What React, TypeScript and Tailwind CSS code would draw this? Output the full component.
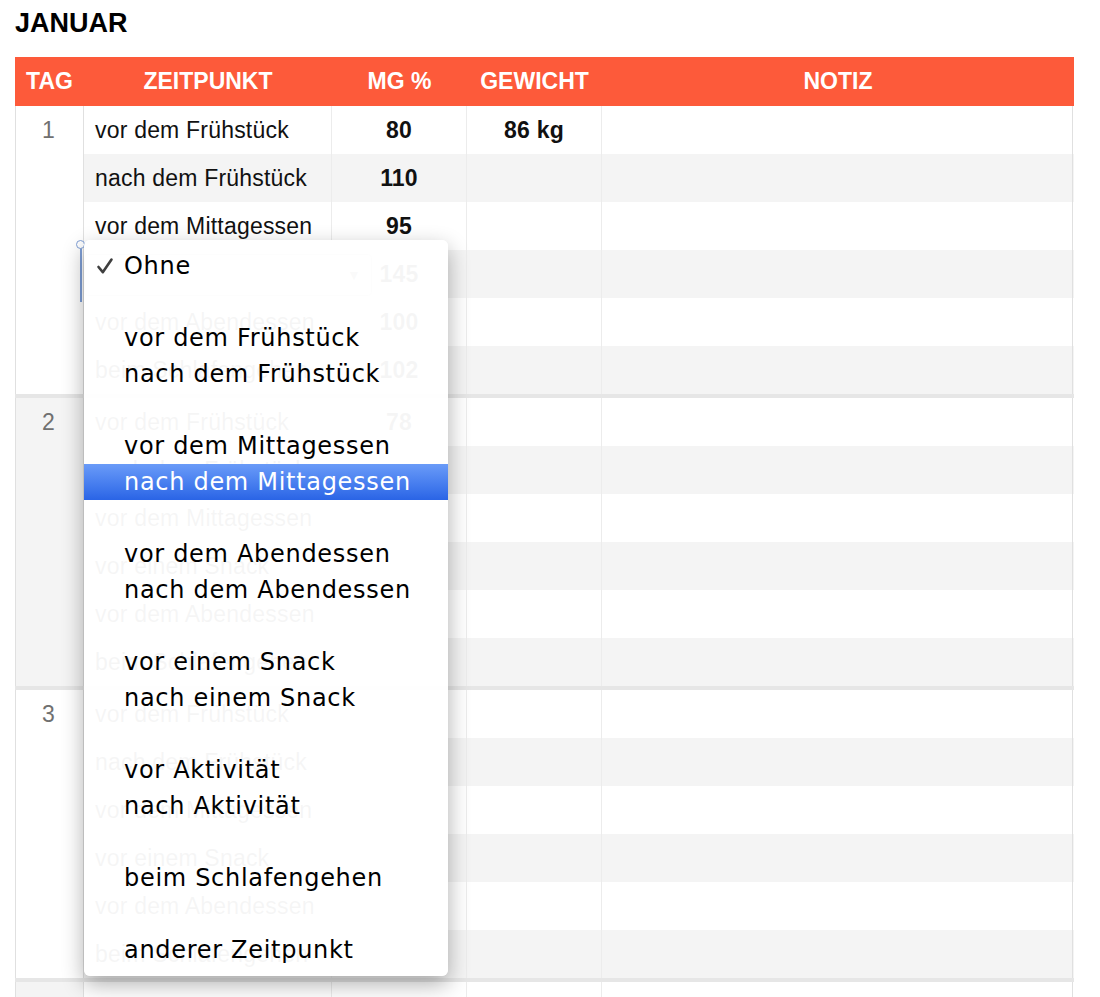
import React from "react";

type Entry = { time?: string; mg?: string; weight?: string; editing?: boolean };

// Tageseinträge (Januar)
const DAYS: Entry[][] = [
  [
    { time: "vor dem Frühstück", mg: "80", weight: "86 kg" },
    { time: "nach dem Frühstück", mg: "110" },
    { time: "vor dem Mittagessen", mg: "95" },
    { editing: true, mg: "145" },
    { time: "vor dem Abendessen", mg: "100" },
    { time: "beim Schlafengehen", mg: "102" },
  ],
  [
    { time: "vor dem Frühstück", mg: "78" },
    { time: "nach dem Frühstück" },
    { time: "vor dem Mittagessen" },
    { time: "vor einem Snack" },
    { time: "vor dem Abendessen" },
    { time: "beim Schlafengehen" },
  ],
  [
    { time: "vor dem Frühstück" },
    { time: "nach dem Frühstück" },
    { time: "vor dem Mittagessen" },
    { time: "vor einem Snack" },
    { time: "vor dem Abendessen" },
    { time: "beim Schlafengehen" },
  ],
  [{}, {}, {}, {}, {}, {}],
];

// null = leere Trennzeile im Menü
const MENU: (string | null)[] = [
  "Ohne",
  null,
  "vor dem Frühstück",
  "nach dem Frühstück",
  null,
  "vor dem Mittagessen",
  "nach dem Mittagessen",
  null,
  "vor dem Abendessen",
  "nach dem Abendessen",
  null,
  "vor einem Snack",
  "nach einem Snack",
  null,
  "vor Aktivität",
  "nach Aktivität",
  null,
  "beim Schlafengehen",
  null,
  "anderer Zeitpunkt",
];

const HIGHLIGHT = "nach dem Mittagessen";

export default function App() {
  return (
    <div className="h-[997px] overflow-hidden bg-white font-['Liberation_Sans',Arial,sans-serif] text-[#111]">
      <div className="pl-[15px] pt-[7px]">
        <h1 className="text-[27px] font-bold leading-[32px] text-black">JANUAR</h1>
        <div className="relative mt-[18px] w-[1059px]">
          <Header />
          {DAYS.map((rows, i) => (
            <DayBlock key={i} day={i + 1} rows={rows} shaded={i % 2 === 1} showDay={i < 3} />
          ))}
          <Menu />
        </div>
      </div>
    </div>
  );
}

function Header() {
  return (
    <div className="grid h-[49px] grid-cols-[69px_248px_135px_135px_472px] items-center bg-[#fd5a3a] text-[23px] font-bold text-white">
      <div className="text-center">TAG</div>
      <div className="text-center">ZEITPUNKT</div>
      <div className="text-center">MG %</div>
      <div className="text-center">GEWICHT</div>
      <div className="text-center">NOTIZ</div>
    </div>
  );
}

function DayBlock({
  day,
  rows,
  shaded,
  showDay,
}: {
  day: number;
  rows: Entry[];
  shaded: boolean;
  showDay: boolean;
}) {
  return (
    <>
      <div className="flex">
        <div
          className={`w-[69px] shrink-0 border-l border-r border-[#e0e0e0] ${shaded ? "bg-[#f4f4f4]" : "bg-white"}`}
        >
          <div className="flex h-[48px] items-center justify-center pr-[2px] text-[23px] text-[#707070]">
            {showDay ? day : null}
          </div>
        </div>
        <div className="flex-1">
          {rows.map((r, i) => (
            <Row key={i} entry={r} striped={i % 2 === 1} />
          ))}
        </div>
      </div>
      <div className="h-[4px] bg-[#e6e6e6]" />
    </>
  );
}

function Row({ entry, striped }: { entry: Entry; striped: boolean }) {
  return (
    <div
      className={`grid h-[48px] grid-cols-[248px_135px_135px_471px] text-[23px] tracking-[0.2px] ${striped ? "bg-[#f4f4f4]" : "bg-white"}`}
    >
      <div className="relative flex items-center border-r border-[#ececec] pl-[11px]">
        {entry.editing ? <EditingCell /> : entry.time}
      </div>
      <div className="flex items-center justify-center border-r border-[#ececec] font-bold">{entry.mg}</div>
      <div className="flex items-center justify-center border-r border-[#ececec] font-bold">{entry.weight}</div>
      <div className="border-r border-[#e0e0e0]" />
    </div>
  );
}

function EditingCell() {
  return (
    <>
      {/* Auswahlrahmen mit Griff */}
      <div className="absolute left-[-4px] top-[-4px] h-[56px] border-l-2 border-[#7f9fd6]" />
      <div className="absolute left-[-8px] top-[-10px] h-[9px] w-[9px] rounded-full border border-[#7f9fd6] bg-white" />
      {/* Popup-Feld */}
      <div className="absolute left-[0px] top-[4px] flex h-[42px] w-[288px] items-center justify-end rounded-[4px] border border-[#cfcfcf] bg-white pr-[10px] text-[14px] text-[#777]">
        ▼
      </div>
    </>
  );
}

function CheckIcon() {
  return (
    <svg width="18" height="18" viewBox="0 0 18 18" className="absolute left-[12px] top-[9px]" aria-hidden>
      <path
        d="M2.5 10 L6.8 15.2 L15.5 2.5"
        fill="none"
        stroke="#3f3f3f"
        strokeWidth="2.6"
        strokeLinecap="round"
        strokeLinejoin="round"
      />
    </svg>
  );
}

function Menu() {
  return (
    <div className="absolute left-[69px] top-[183px] z-10 w-[364px] rounded-[6px] bg-white/[0.96] py-[8px] font-['DejaVu_Sans',Verdana,sans-serif] text-[24px] tracking-[0.7px] text-black shadow-[0_8px_22px_rgba(0,0,0,0.32)]">
      {MENU.map((label, i) => {
        const active = label === HIGHLIGHT;
        return (
          <div
            key={i}
            className={`relative flex h-[36px] items-center pl-[40px] ${active ? "bg-gradient-to-b from-[#6a9bf8] to-[#2a64e6] text-white" : ""}`}
          >
            {i === 0 && <CheckIcon />}
            {label}
          </div>
        );
      })}
    </div>
  );
}
